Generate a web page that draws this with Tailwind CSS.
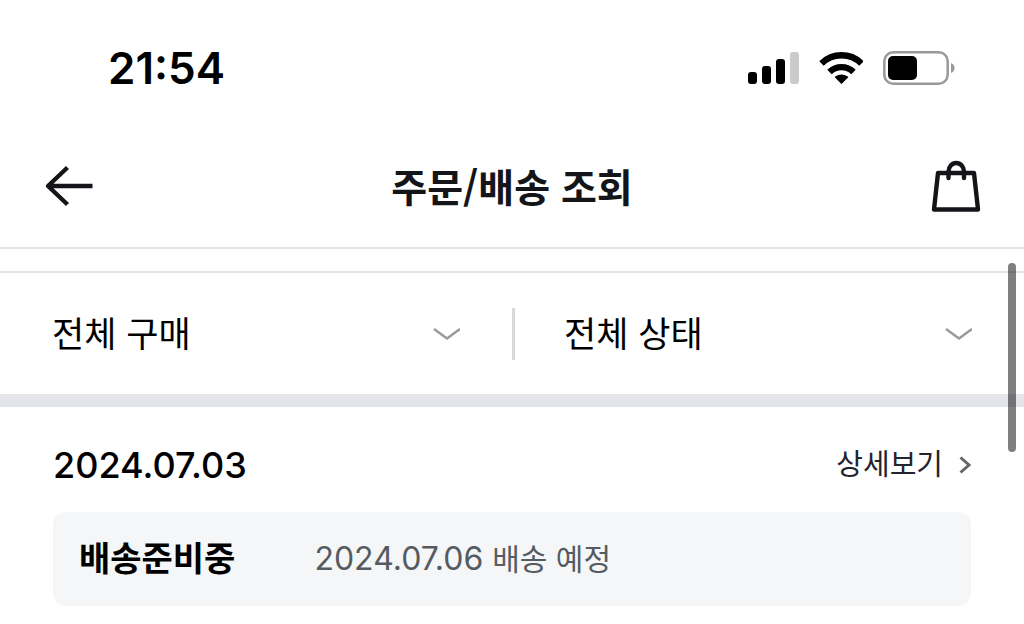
<!DOCTYPE html>
<html lang="ko">
<head>
<meta charset="utf-8">
<meta name="viewport" content="width=device-width, initial-scale=1">
<title>주문/배송 조회</title>
<script src="https://cdn.jsdelivr.net/npm/@tailwindcss/browser@4"></script>
</head>
<body class="relative min-h-screen overflow-x-hidden bg-white text-black font-['Inter','Noto_Sans_CJK_KR',sans-serif]">
  <div class="flex h-[124px] items-center justify-between pt-3 pl-[108px] pr-[68px]">
    <time class="text-[44px] leading-[56px] font-semibold">21:54</time>
    <div class="flex items-center gap-5">
      <svg class="h-9 w-[51px]" viewBox="0 0 51 36" aria-label="신호 세기" role="img">
        <rect x="0" y="22" width="9" height="12" rx="3"/>
        <rect x="14" y="16" width="9" height="18" rx="3"/>
        <rect x="28" y="9" width="9" height="25" rx="3"/>
        <rect x="42" y="2" width="9" height="32" rx="3" fill="#cbcbcb"/>
      </svg>
      <svg class="h-9 w-11" viewBox="0 0 44 36" aria-label="와이파이" role="img">
        <g fill="none" stroke="#000" stroke-width="6.400">
          <path d="M2.500 13.500A28.500 28.500 0 0 1 42.500 13.500"/>
          <path d="M10.500 22A17.200 17.200 0 0 1 34.500 22"/>
        </g>
        <path d="M16 27.500Q15.500 26.900 16.200 26.500Q22.500 22.500 28.800 26.500Q29.500 26.900 29 27.500L23.100 33.500Q22.500 34.200 21.900 33.500Z"/>
      </svg>
      <svg class="h-9 w-[73px]" viewBox="0 0 73 36" aria-label="배터리" role="img">
        <rect x="1.300" y="2.300" width="63.400" height="31.400" rx="9" fill="none" stroke="#999" stroke-width="2.500"/>
        <rect x="5" y="6" width="29" height="24" rx="5"/>
        <path d="M68 13Q71.500 14.500 71.500 18Q71.500 21.500 68 23Z" fill="#999"/>
      </svg>
    </div>
  </div>

  <header class="flex h-[125px] items-center justify-between border-b-2 border-[#e5e5e6] pl-[42px] pr-[42px]">
    <button type="button" aria-label="뒤로" class="h-[52px] w-[52px]">
      <svg class="h-[52px] w-[52px]" viewBox="0 0 52 52" fill="none" stroke="#141518" stroke-width="4.400" stroke-linejoin="round">
        <path d="M50.500 26H6M25.500 7.500L6 26L25.500 44.500"/>
      </svg>
    </button>
    <h1 class="pb-[2px] text-[39px] leading-[56px] font-bold text-[#141518] font-['Noto_Sans_CJK_KR',sans-serif]">주문/배송 조회</h1>
    <button type="button" aria-label="장바구니" class="h-[52px] w-[52px]">
      <svg class="h-[52px] w-[52px]" viewBox="0 0 52 52" fill="none" stroke="#141518" stroke-width="4.400" stroke-linejoin="round" stroke-linecap="round">
        <path d="M8 13H44L48 49.500H4Z"/>
        <path d="M18.500 18V11.500A7.700 8.500 0 0 1 34 11.500V18"/>
      </svg>
    </button>
  </header>

  <main class="pt-[22px]">
    <form class="flex items-center border-t-2 border-b-[13px] border-t-[#e5e5e6] border-b-[#e4e5ea] pt-[31px] pb-[30px]">
      <div class="grid w-1/2 items-center">
        <select aria-label="구매 유형" class="col-start-1 row-start-1 h-[60px] w-full appearance-none bg-transparent pb-1 pl-[52px] text-[35px] leading-[56px] font-['Noto_Sans_CJK_KR',sans-serif]"><option>전체 구매</option></select>
        <svg class="pointer-events-none col-start-1 row-start-1 mr-[52px] h-4 w-7 justify-self-end" viewBox="0 0 28 16" fill="none" stroke="#999" stroke-width="2.500"><path d="M2 3L15 12.500L28 3"/></svg>
      </div>
      <div class="h-[52px] w-[3px] bg-[#d8dadc]"></div>
      <div class="grid flex-1 items-center">
        <select aria-label="주문 상태" class="col-start-1 row-start-1 h-[60px] w-full appearance-none bg-transparent pb-1 pl-[49px] text-[35px] leading-[56px] font-['Noto_Sans_CJK_KR',sans-serif]"><option>전체 상태</option></select>
        <svg class="pointer-events-none col-start-1 row-start-1 mr-[52px] h-4 w-7 justify-self-end" viewBox="0 0 28 16" fill="none" stroke="#999" stroke-width="2.500"><path d="M2 3L15 12.500L28 3"/></svg>
      </div>
    </form>

    <section class="px-[53px] pt-[32px] pb-[18px]">
      <div class="flex items-center justify-between pb-[21px]">
        <h2 class="text-[36px] leading-[52px] font-medium">2024.07.03</h2>
        <a href="#detail" class="flex items-center gap-4 text-[29px] leading-[52px] text-[#22242e]">상세보기
          <svg class="h-5 w-3" viewBox="0 0 12 20" fill="none" stroke="#666" stroke-width="3"><path d="M1.500 2.500L10 10L1.500 17.500"/></svg>
        </a>
      </div>
      <div class="flex h-[94px] items-center gap-[79px] rounded-[13px] bg-[#f5f6f8] px-[26px]">
        <strong class="text-[34px] leading-[52px] font-bold">배송준비중</strong>
        <p class="text-[32px] leading-[52px] text-[#555c61]">2024.07.06 <span class="text-[30px]">배송 예정</span></p>
      </div>
    </section>
  </main>

  <div class="absolute top-[263px] right-2 h-[189px] w-2 rounded-full bg-black/50"></div>
</body>
</html>
